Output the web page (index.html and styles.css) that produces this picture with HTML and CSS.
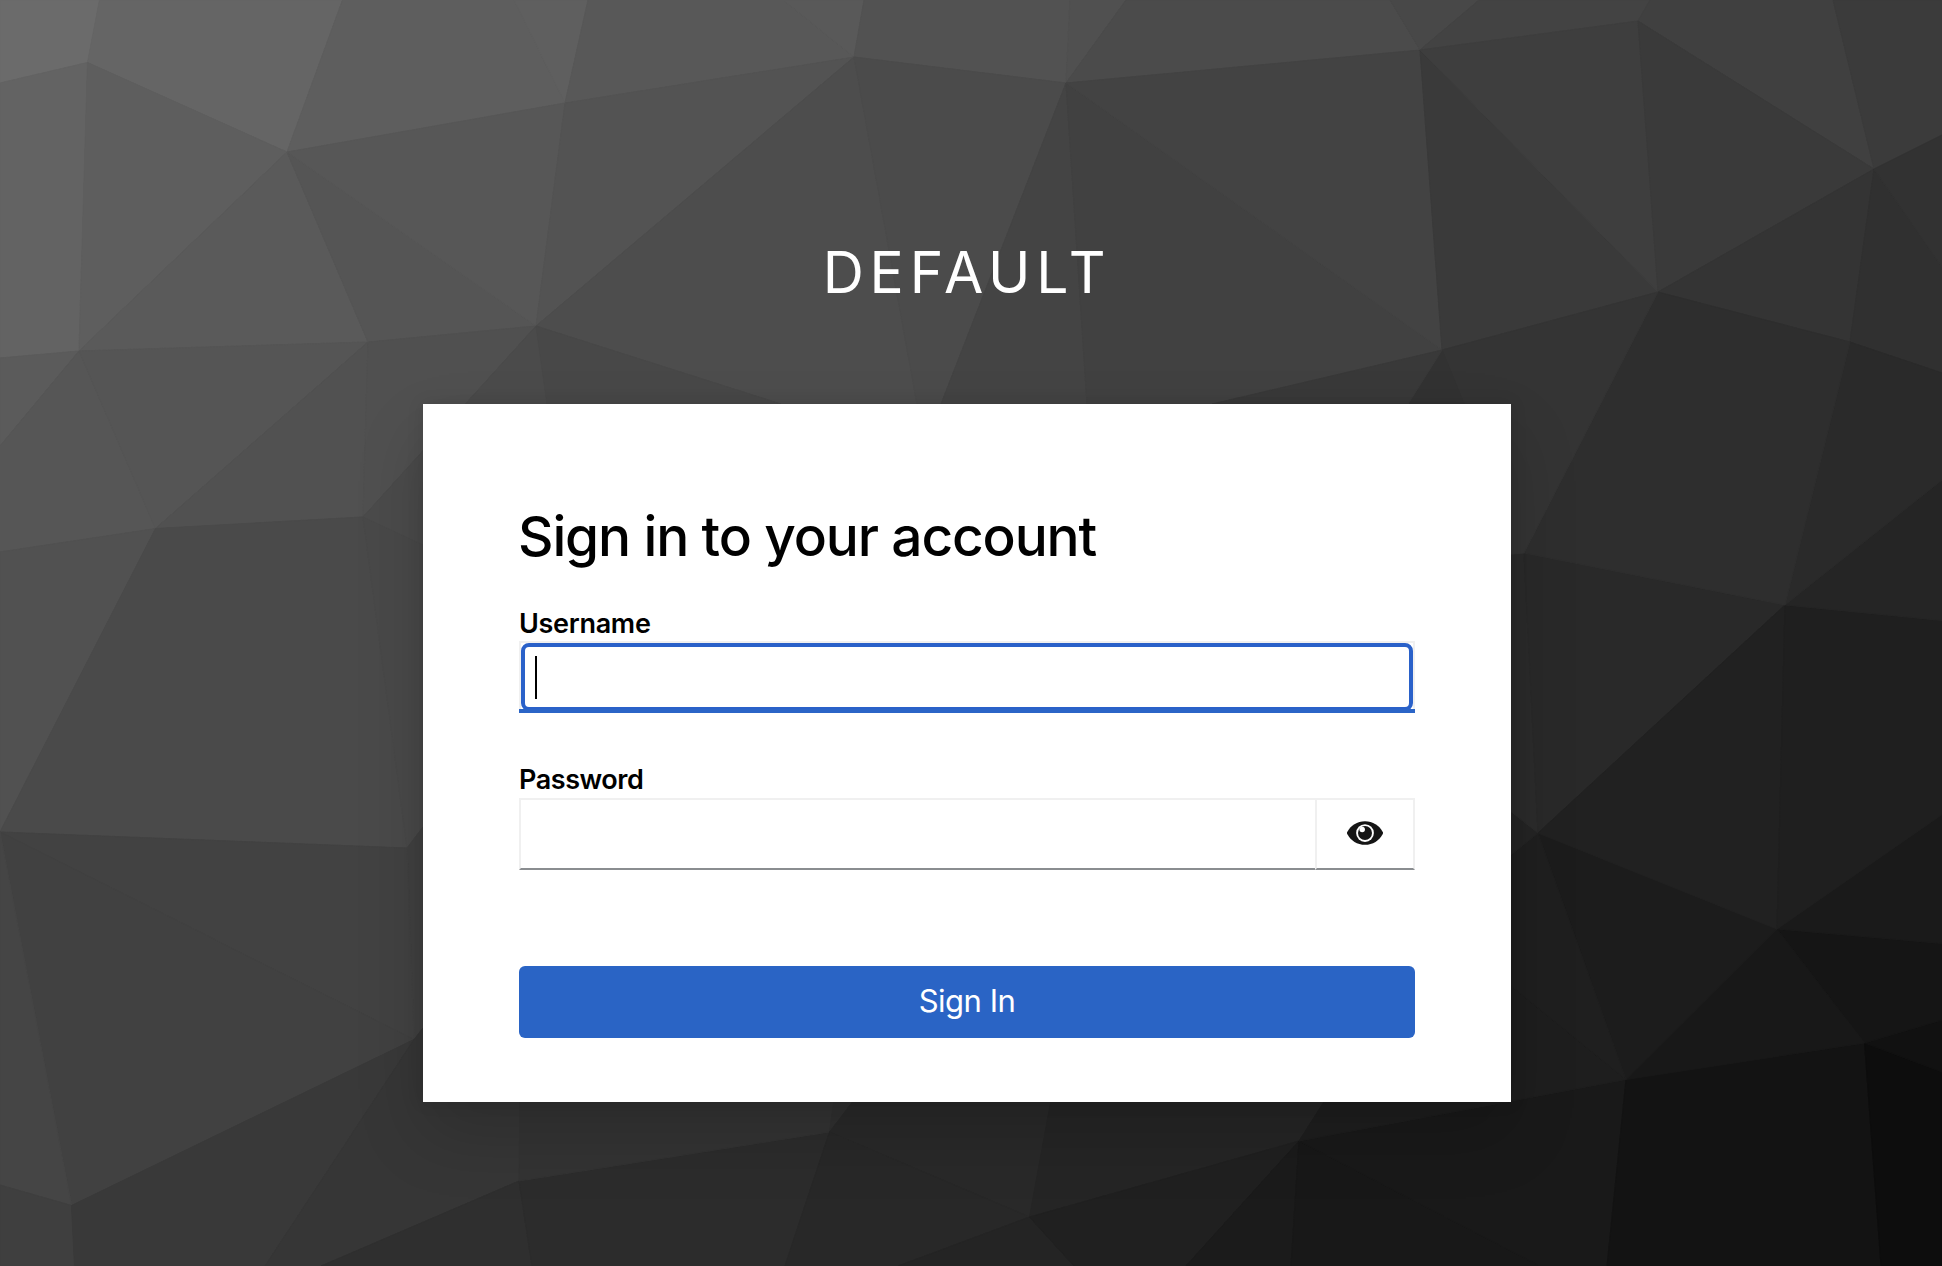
FILE: index.html
```html
<!DOCTYPE html>
<html lang="en">
<head>
<meta charset="utf-8">
<title>Sign in to Default</title>
<link rel="stylesheet" href="styles.css">
</head>
<body>
<svg class="backdrop" viewBox="0 0 1942 1266" preserveAspectRatio="xMidYMid slice" aria-hidden="true">
<rect width="1942" height="1266" fill="#333"/>
<g class="facets">
<path color="#6b6b6b" d="M0 0H99.5L87.5 62.5 0 83z"/>
<path color="#656565" d="M99.5 0H342.5L287 152 87.5 62.5z"/>
<path color="#5e5e5e" d="M342.5 0H514L565 103 287 152z"/>
<path color="#5f5f5f" d="M514 0H588L565 103z"/>
<path color="#585858" d="M588 0H783L854 57 565 103z"/>
<path color="#595959" d="M783 0H864L854 57z"/>
<path color="#525252" d="M864 0H1070L1066 83 854 57z"/>
<path color="#505050" d="M1070 0H1126L1066 83z"/>
<path color="#4b4b4b" d="M1126 0H1390L1420 50 1066 83z"/>
<path color="#484848" d="M1390 0H1479L1420 50z"/>
<path color="#434343" d="M1479 0H1650L1638 21 1420 50z"/>
<path color="#404040" d="M1650 0H1833L1874 169 1638 21z"/>
<path color="#3b3b3b" d="M1833 0H1942V135L1874 169z"/>
<path color="#636363" d="M0 83 87.5 62.5 79 351 0 358z"/>
<path color="#5e5e5e" d="M87.5 62.5 287 152 79 351z"/>
<path color="#5a5a5a" d="M287 152 79 351 368 342z"/>
<path color="#555" d="M287 152 368 342 536 326z"/>
<path color="#575757" d="M287 152 565 103 536 326z"/>
<path color="#535353" d="M565 103 854 57 536 326z"/>
<path color="#4d4d4d" d="M854 57 536 326 781 404H917z"/>
<path color="#4b4b4b" d="M854 57 1066 83 941 404H917z"/>
<path color="#444" d="M1066 83 941 404H1087z"/>
<path color="#414141" d="M1066 83 1087 404H1212L1442 350z"/>
<path color="#434343" d="M1066 83 1442 350 1420 50z"/>
<path color="#3a3a3a" d="M1420 50 1442 350 1658 292z"/>
<path color="#3e3e3e" d="M1420 50 1658 292 1638 21z"/>
<path color="#3a3a3a" d="M1638 21 1658 292 1874 169z"/>
<path color="#343434" d="M1874 169 1658 292 1850 342z"/>
<path color="#303030" d="M1874 169 1850 342 1942 373V267z"/>
<path color="#323232" d="M1874 169 1942 135V267z"/>
<path color="#5b5b5b" d="M0 358 79 351 0 446z"/>
<path color="#565656" d="M79 351 155.5 528.5 0 552V446z"/>
<path color="#555" d="M79 351 368 342 155.5 528.5z"/>
<path color="#515151" d="M368 342 155.5 528.5 363 517z"/>
<path color="#505050" d="M368 342 536 326 363 517z"/>
<path color="#4b4b4b" d="M536 326 363 517 423 545 547 404z"/>
<path color="#484848" d="M536 326 547 404H781z"/>
<path color="#515151" d="M0 552 155.5 528.5 0 832z"/>
<path color="#4a4a4a" d="M155.5 528.5 363 517 407 848 0 832z"/>
<path color="#494949" d="M363 517 423 545V827L407 848z"/>
<path color="#414141" d="M407 848 423 827V1028L414 1039.5z"/>
<path color="#424242" d="M0 832 407 848 414 1039.5z"/>
<path color="#414141" d="M0 832 414 1039.5 71.5 1205.5z"/>
<path color="#454545" d="M0 832 71.5 1205.5 0 1185z"/>
<path color="#3f3f3f" d="M0 1185 71.5 1205.5 74.5 1266H0z"/>
<path color="#393939" d="M71.5 1205.5 414 1039.5 265 1266H74.5z"/>
<path color="#363636" d="M414 1039.5 423 1028 520 1100 519 1181 321 1266H265z"/>
<path color="#2f2f2f" d="M519 1181 321 1266H532z"/>
<path color="#2c2c2c" d="M519 1181 532 1266H785L829.5 1132z"/>
<path color="#333" d="M519 1181 520 1100H834L829.5 1132z"/>
<path color="#303030" d="M829.5 1132 834 1100H854z"/>
<path color="#292929" d="M829.5 1132 854 1100H1051L1029.5 1217z"/>
<path color="#282828" d="M829.5 1132 1029.5 1217 898 1266H785z"/>
<path color="#242424" d="M1029.5 1217 898 1266H1074z"/>
<path color="#252525" d="M1029.5 1217 1051 1100H1325L1299 1141z"/>
<path color="#202020" d="M1029.5 1217 1299 1141 1186 1266H1074z"/>
<path color="#1b1b1b" d="M1299 1141 1186 1266H1291z"/>
<path color="#181818" d="M1299 1141 1291 1266H1540z"/>
<path color="#191919" d="M1299 1141 1626 1079.5 1607 1266H1540z"/>
<path color="#1e1e1e" d="M1299 1141 1325 1100 1500 977 1626 1079.5z"/>
<path color="#131313" d="M1626 1079.5 1607 1266H1881L1864.5 1043z"/>
<path color="#0d0d0d" d="M1864.5 1043 1881 1266H1942V1072z"/>
<path color="#111" d="M1864.5 1043 1942 1072V1020z"/>
<path color="#151515" d="M1864.5 1043 1777 929 1942 943.5V1020z"/>
<path color="#1a1a1a" d="M1777 929 1942 943.5V814.5z"/>
<path color="#181818" d="M1626 1079.5 1777 929 1864.5 1043z"/>
<path color="#1c1c1c" d="M1626 1079.5 1538 833 1777 929z"/>
<path color="#1f1f1f" d="M1538 833 1626 1079.5 1500 977V864z"/>
<path color="#242424" d="M1538 833 1500 803V864z"/>
<path color="#2b2b2b" d="M1538 833 1524 553 1500 555V803z"/>
<path color="#292929" d="M1538 833 1524 553 1785 605z"/>
<path color="#212121" d="M1538 833 1785 605 1777 929z"/>
<path color="#1f1f1f" d="M1785 605 1777 929 1942 814.5V620.5z"/>
<path color="#252525" d="M1785 605 1942 620.5V480z"/>
<path color="#2a2a2a" d="M1785 605 1850 342 1942 373V480z"/>
<path color="#2e2e2e" d="M1524 553 1658 292 1850 342 1785 605z"/>
<path color="#343434" d="M1524 553 1658 292 1442 350 1464 404 1500 555z"/>
<path color="#323232" d="M1442 350 1408 406H1465z"/>
<path color="#393939" d="M1442 350 1212 404H1408z"/>
</g>
</svg>
<div class="login">
  <header class="realm">Default</header>
  <main class="card">
    <h1 class="title">Sign in to your account</h1>
    <form class="form">
      <label class="label" for="username">Username</label>
      <div class="control control-focused" id="username"><span class="caret"></span></div>
      <label class="label label-password" for="password">Password</label>
      <div class="password-row">
        <input class="control password" id="password" type="password">
        <button class="reveal" type="button" aria-label="Show password">
          <svg class="eye" viewBox="0 0 576 512">
            <path fill="currentColor" d="M572.52 241.4C518.29 135.59 410.93 68 288 68S57.68 135.64 3.48 241.41a32.35 32.35 0 0 0 0 29.19C57.71 376.41 165.07 444 288 444s230.32-67.64 284.52-173.41a32.35 32.35 0 0 0 0-29.19z"/>
            <circle cx="288" cy="256" r="142" fill="#fff"/>
            <circle cx="288" cy="256" r="112" fill="currentColor"/>
            <circle cx="243" cy="200" r="44" fill="#fff"/>
          </svg>
        </button>
      </div>
      <button class="submit" type="button">Sign In</button>
    </form>
  </main>
</div>
</body>
</html>
```
FILE: styles.css
```css
* { box-sizing: border-box; }
body {
  margin: 0;
  height: 1266px;
  overflow: hidden;
  background: #333;
  color: #000;
  font-family: Inter, "Liberation Sans", sans-serif;
}
.backdrop {
  position: absolute;
  inset: 0;
  width: 100%;
  height: 100%;
}
/* The stroke closes the hairline seams between neighbouring facets. */
.facets path {
  fill: currentColor;
  stroke: currentColor;
  stroke-width: 1;
  stroke-linejoin: round;
}
.login {
  position: relative;
  display: flex;
  flex-direction: column;
  width: 1088px;
  margin-left: 423px;
}
.realm {
  height: 404px;
  padding-top: 233px;
  color: #fff;
  font-size: 57px;
  line-height: 80px;
  letter-spacing: 5.8px;
  text-align: center;
  text-transform: uppercase;
}
.card {
  height: 698px;
  padding: 95px 96px 64px;
  background: #fff;
  box-shadow: 0 32px 64px rgba(3, 3, 3, .16), 0 0 16px rgba(3, 3, 3, .1);
}
.title {
  margin: 0 0 0 -1px;
  height: 107px;
  font-size: 55px;
  font-weight: 500;
  line-height: 74px;
  letter-spacing: -1.15px;
  white-space: nowrap;
}
.form {
  display: flex;
  flex-direction: column;
}
.label {
  height: 35px;
  font-size: 27px;
  font-weight: 600;
  line-height: 36px;
  letter-spacing: -.3px;
}
.label-password {
  height: 36px;
  margin-top: 49px;
  letter-spacing: -.45px;
}
.control {
  height: 72px;
  border: 2px solid #f0f0f0;
  border-bottom-color: #8a8d90;
  border-radius: 0;
  background: #fff;
  outline: none;
}
.control-focused {
  position: relative;
  padding: 13px 14px;
}
.control-focused::before {
  content: "";
  position: absolute;
  inset: 0;
  border: 4px solid #2a61c9;
  border-radius: 8px;
}
.control-focused::after {
  content: "";
  position: absolute;
  inset: auto -2px -2px;
  height: 4px;
  background: #2b65c7;
}
.caret {
  display: block;
  width: 2px;
  height: 43px;
  background: #000;
}
.password-row { display: flex; }
.password { flex: 1; border-right: 0; }
.reveal {
  display: grid;
  place-items: center;
  width: 100px;
  height: 72px;
  padding: 0 0 2px;
  border: 2px solid #f0f0f0;
  border-bottom-color: #8a8d90;
  background: #fff;
  color: #151515;
}
.eye { width: 36px; height: 32px; }
.submit {
  height: 72px;
  margin-top: 96px;
  padding: 0 0 2px;
  border: 0;
  border-radius: 6px;
  background: #2a64c5;
  color: #fff;
  font: 400 31px/70px Inter, "Liberation Sans", sans-serif;
  letter-spacing: -.5px;
}
```
